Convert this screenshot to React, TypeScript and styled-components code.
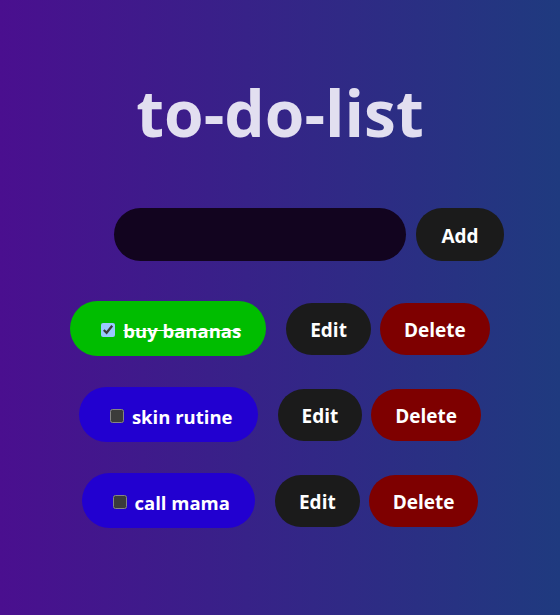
import React, { useState } from "react";
import styled, { createGlobalStyle } from "styled-components";

const Global = createGlobalStyle`
  html, body { margin: 0; padding: 0; }
  body {
    min-height: 100vh;
    background: linear-gradient(90deg, #4a0f8f 0%, #1f3a7f 100%);
    font-family: "Open Sans", "Noto Sans", sans-serif;
  }
`;

const Page = styled.div`
  min-height: 615px;
  display: flex;
  flex-direction: column;
  align-items: center;
  padding-top: 70px;
  box-sizing: border-box;
`;

const Title = styled.h1`
  margin: 0;
  font-size: 64px;
  font-weight: 700;
  color: #e2dff0;
  line-height: 86px;
`;

const Form = styled.div`
  display: flex;
  align-items: center;
  gap: 10px;
  margin-top: 52px;
  padding-left: 58px;
`;

const Input = styled.input`
  width: 292px;
  height: 53px;
  box-sizing: border-box;
  border: none;
  border-radius: 27px;
  background: #12041f;
  outline: none;
  color: #fff;
  padding: 0 20px;
  font-size: 20px;
`;

const Button = styled.button<{ $variant?: "dark" | "red" }>`
  height: 52px;
  border: none;
  border-radius: 26px;
  padding: 3px 24px 0;
  font-family: inherit;
  font-size: 19px;
  font-weight: 700;
  color: #fff;
  background: ${(p) => (p.$variant === "red" ? "#7e0000" : "#1b1b1b")};
  cursor: pointer;
`;

const AddButton = styled(Button)`
  height: 53px;
  width: 88px;
  padding: 2px 0 0;
`;

const List = styled.div`
  display: flex;
  flex-direction: column;
  align-items: center;
  gap: 31px;
  margin-top: 40px;
`;

const Row = styled.div`
  display: flex;
  align-items: center;
`;

const Pill = styled.label<{ $done: boolean }>`
  height: 55px;
  box-sizing: border-box;
  display: flex;
  align-items: center;
  gap: 8px;
  padding: 3px 25px 0 27px;
  border-radius: 28px;
  background: ${(p) => (p.$done ? "#00bd00" : "#2200d0")};
  color: #fff;
  font-size: 18.5px;
  font-weight: 700;
  margin-right: 20px;
  text-decoration: ${(p) => (p.$done ? "line-through" : "none")};
`;

const Check = styled.input`
  color-scheme: dark;
  width: 14px;
  height: 14px;
  margin: 0 0 0 4px;
`;

const EditButton = styled(Button)`
  margin-right: 9px;
`;

export default function App() {
  const [items, setItems] = useState([
    { text: "buy bananas", done: true },
    { text: "skin rutine", done: false },
    { text: "call mama", done: false },
  ]);
  return (
    <>
      <Global />
      <Page>
        <Title>to-do-list</Title>
        <Form>
          <Input />
          <AddButton>Add</AddButton>
        </Form>
        <List>
          {items.map((it, i) => (
            <Row key={i}>
              <Pill $done={it.done}>
                <Check
                  type="checkbox"
                  checked={it.done}
                  onChange={() =>
                    setItems(items.map((x, j) => (j === i ? { ...x, done: !x.done } : x)))
                  }
                />
                {it.text}
              </Pill>
              <EditButton>Edit</EditButton>
              <Button $variant="red">Delete</Button>
            </Row>
          ))}
        </List>
      </Page>
    </>
  );
}
